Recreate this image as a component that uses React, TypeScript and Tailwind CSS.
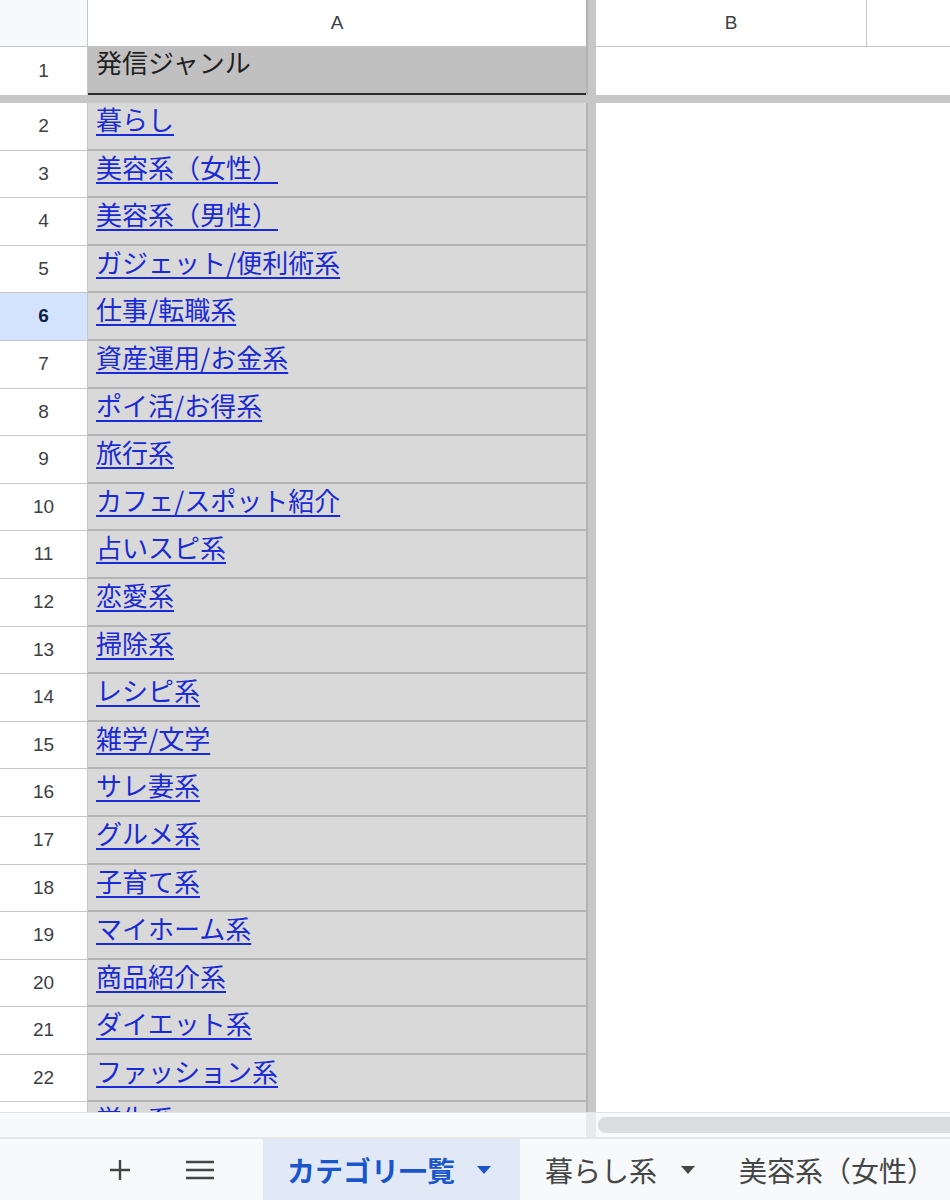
import React from "react";

const rows = [
  "暮らし",
  "美容系（女性）",
  "美容系（男性）",
  "ガジェット/便利術系",
  "仕事/転職系",
  "資産運用/お金系",
  "ポイ活/お得系",
  "旅行系",
  "カフェ/スポット紹介",
  "占いスピ系",
  "恋愛系",
  "掃除系",
  "レシピ系",
  "雑学/文学",
  "サレ妻系",
  "グルメ系",
  "子育て系",
  "マイホーム系",
  "商品紹介系",
  "ダイエット系",
  "ファッション系",
  "学生系"
];

const jp = "font-['Noto_Sans_CJK_JP','Noto_Sans',sans-serif]";
const num = "font-['Liberation_Sans',Arial,sans-serif]";

const Divider = () => <div className="w-[10px] shrink-0 self-stretch bg-[#c7c7c7] border-l-[2px] border-[#b3b3b3]" />;

const Caret = ({ color }: { color: string }) => (
  <svg width="14" height="8" viewBox="0 0 14 8" className="shrink-0">
    <path d="M0 0 H14 L7 8 Z" fill={color} />
  </svg>
);

const DataRow = ({ n, label }: { n: number; label: string }) => {
  const active = n === 6;
  return (
    <div className="flex h-[47.6px] shrink-0">
      <div
        className={`w-[88px] shrink-0 flex items-center justify-center border-r border-b border-[#c4c7c5] text-[19px] ${num} ${
          active ? "bg-[#d3e3fd] font-bold text-[#0b1f45]" : "bg-white text-[#3c4043]"
        }`}
      >
        {n}
      </div>
      <div className="w-[498px] shrink-0 bg-[#d9d9d9] border-b-[2px] border-[#b4b4b4] pl-[8px]">
        <a
          href="#"
          className={`${jp} block text-[26px] leading-[32px] text-[#1a2ad4] underline underline-offset-[4px] decoration-[2px] whitespace-nowrap`}
        >
          {label}
        </a>
      </div>
      <Divider />
      <div className="flex-1 bg-white" />
    </div>
  );
};

export default function App() {
  return (
    <div className="w-[950px] h-[1200px] flex flex-col overflow-hidden bg-white">
      <div className="h-[1112px] flex flex-col overflow-hidden">
        {/* column headers */}
        <div className="flex h-[47px] shrink-0">
          <div className="w-[88px] shrink-0 bg-[#f8f9fa] border-r border-b border-[#c4c7c5]" />
          <div className={`w-[498px] shrink-0 flex items-center justify-center border-b border-[#c4c7c5] text-[19px] text-[#3c4043] ${num}`}>
            A
          </div>
          <Divider />
          <div className={`w-[271px] shrink-0 flex items-center justify-center border-r border-b border-[#c4c7c5] text-[19px] text-[#3c4043] ${num}`}>
            B
          </div>
          <div className="flex-1 border-b border-[#c4c7c5]" />
        </div>

        {/* row 1 */}
        <div className="flex h-[48px] shrink-0">
          <div className={`w-[88px] shrink-0 flex items-center justify-center border-r border-[#c4c7c5] text-[19px] text-[#3c4043] ${num}`}>
            1
          </div>
          <div className="w-[498px] shrink-0 bg-[#bfc0bf] border-b-[2px] border-[#2b2b2b] pl-[8px]">
            <span className={`${jp} block text-[26px] leading-[30px] text-[#1f1f1f]`}>発信ジャンル</span>
          </div>
          <Divider />
          <div className="flex-1 bg-white" />
        </div>

        {/* frozen divider */}
        <div className="h-[8px] shrink-0 bg-[#c7c7c7]" />

        {rows.map((label, i) => (
          <DataRow key={label} n={i + 2} label={label} />
        ))}
      </div>

      {/* horizontal scrollbar */}
      <div className="h-[25px] shrink-0 flex bg-[#f8f9fa] border-t border-[#e3e3e3]">
        <div className="w-[586px] shrink-0" />
        <div className="w-[10px] shrink-0 bg-[#e8eaed]" />
        <div className="flex-1 flex items-center pl-[2px]">
          <div className="h-[16px] w-full rounded-l-full bg-[#dadce0]" />
        </div>
      </div>

      {/* sheet tabs */}
      <div className={`flex-1 flex items-stretch bg-[#f8f9fa] border-t-[2px] border-[#e6e7e8] ${jp}`}>
        <div className="w-[100px] shrink-0" />
        <div className="w-[40px] flex items-center justify-center">
          <svg width="24" height="24" viewBox="0 0 24 24">
            <path d="M12 2 V22 M2 12 H22" stroke="#444746" strokeWidth="2.4" />
          </svg>
        </div>
        <div className="w-[40px] ml-[40px] flex items-center justify-center">
          <svg width="28" height="22" viewBox="0 0 28 22">
            <path d="M0 3 H28 M0 11 H28 M0 19 H28" stroke="#444746" strokeWidth="2.6" />
          </svg>
        </div>
        <div className="ml-[43px] w-[257px] shrink-0 bg-[#e1e9f7] flex items-center pl-[24px] gap-[22px]">
          <span className="text-[28px] font-bold text-[#1a56c9] whitespace-nowrap">カテゴリ一覧</span>
          <Caret color="#1a56c9" />
        </div>
        <div className="flex items-center pl-[25px] gap-[24px] shrink-0">
          <span className="text-[28px] text-[#444746] whitespace-nowrap">暮らし系</span>
          <Caret color="#444746" />
        </div>
        <div className="flex items-center pl-[44px] shrink-0">
          <span className="text-[28px] text-[#444746] whitespace-nowrap">美容系（女性）</span>
        </div>
      </div>
    </div>
  );
}
